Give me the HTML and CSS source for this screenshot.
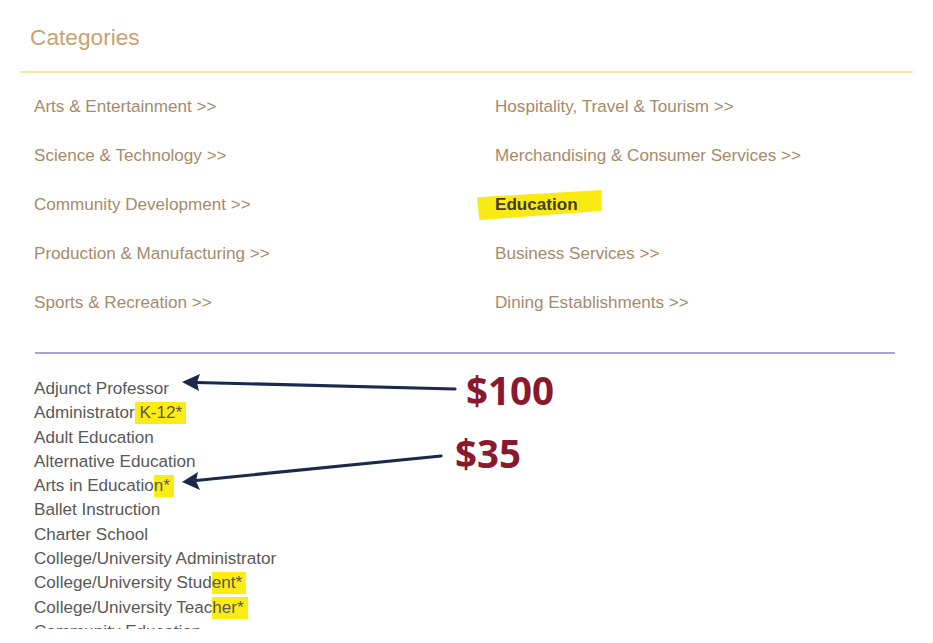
FILE: index.html
```
<!DOCTYPE html>
<html lang="en">
<head>
    <meta charset="UTF-8">
    <title>Categories</title>

    <link rel="stylesheet" href="styles.css">
</head>
<body>

<div id="page">
    <div id="panel">
        <h1 class="title">Categories</h1>

        <div class="cats">
            <a class="cat">Arts &amp; Entertainment &gt;&gt;</a>
            <a class="cat">Hospitality, Travel &amp; Tourism &gt;&gt;</a>
            <a class="cat">Science &amp; Technology &gt;&gt;</a>
            <a class="cat">Merchandising &amp; Consumer Services &gt;&gt;</a>
            <a class="cat">Community Development &gt;&gt;</a>
            <a class="cat current"><span class="brush">Education</span></a>
            <a class="cat">Production &amp; Manufacturing &gt;&gt;</a>
            <a class="cat">Business Services &gt;&gt;</a>
            <a class="cat">Sports &amp; Recreation &gt;&gt;</a>
            <a class="cat">Dining Establishments &gt;&gt;</a>
        </div>

        <div class="rule"></div>

        <ul class="jobs">
            <li>Adjunct Professor</li>
            <li>Administrator<mark> K-12*</mark></li>
            <li>Adult Education</li>
            <li>Alternative Education</li>
            <li>Arts in Educatio<mark>n*</mark></li>
            <li>Ballet Instruction</li>
            <li>Charter School</li>
            <li>College/University Administrator</li>
            <li>College/University Stud<mark>ent*</mark></li>
            <li>College/University Teac<mark>her*</mark></li>
            <li>Community Education</li>
        </ul>
    </div>

    <!-- annotations drawn over the list -->
    <svg class="arrows" width="933" height="643" viewBox="0 0 933 643">
        <line x1="455" y1="389" x2="196" y2="382.5" stroke="#1b2a4c" stroke-width="3.2" stroke-linecap="round"/>
        <polygon points="182,382 200,374 197,382.5 199,391" fill="#1b2a4c"/>
        <line x1="441" y1="456" x2="196" y2="480.5" stroke="#1b2a4c" stroke-width="3.2" stroke-linecap="round"/>
        <polygon points="182,482 198,472 196,481 200,490" fill="#1b2a4c"/>
    </svg>
    <div class="price p100">$100</div>
    <div class="price p35">$35</div>
</div>

</body>
</html>
```

FILE: styles.css
```
body {
    margin: 0;
    background-color: rgb(255, 255, 255);
    font-family: "Liberation Sans", Arial, Helvetica, sans-serif;
}

#page {
    position: relative;
    width: 933px;
    height: 643px;
    overflow: hidden;
}

#panel {
    padding: 0 20px;
}

.title {
    margin: 0;
    padding: 24px 10px 21px;
    font-size: 22.7px;
    line-height: 26px;
    font-weight: 400;
    color: rgb(200, 163, 108);
    border-bottom: 2px solid rgb(247, 232, 170);
}

.cats {
    display: grid;
    grid-template-columns: 461px 1fr;
    padding: 9px 0 0 14px;
}

.cat {
    font-size: 17.1px;
    line-height: 49px;
    color: rgb(166, 138, 106);
    white-space: nowrap;
}

.current {
    font-weight: 700;
    color: rgb(68, 60, 40);
}

.brush {
    display: inline-block;
    line-height: 22px;
    padding: 4px 24px 4px 18px;
    margin-left: -18px;
    background-color: rgb(250, 234, 20);
    clip-path: polygon(0 24%, 100% 0, 100% 70%, 80% 76%, 2% 100%);
}

.rule {
    margin: 25px 18px 0 15px;
    border-top: 2px solid rgb(168, 166, 206);
}

.jobs {
    list-style: none;
    margin: 0;
    padding: 23px 0 0 14px;
    height: 252px;
    overflow: hidden;
}

.jobs li {
    font-size: 17.1px;
    line-height: 24.3px;
    color: rgb(88, 88, 88);
    white-space: nowrap;
}

mark {
    background-color: rgb(252, 236, 20);
    color: rgb(88, 88, 80);
    padding: 1px 4px 2px 0;
}

.arrows {
    position: absolute;
    left: 0;
    top: 0;
    pointer-events: none;
}

.price {
    position: absolute;
    font-family: "Open Sans", sans-serif;
    font-weight: 700;
    font-size: 38.5px;
    line-height: 44px;
    color: rgb(138, 24, 46);
}

.p100 {
    left: 466px;
    top: 368px;
}

.p35 {
    left: 455px;
    top: 431px;
}
```
